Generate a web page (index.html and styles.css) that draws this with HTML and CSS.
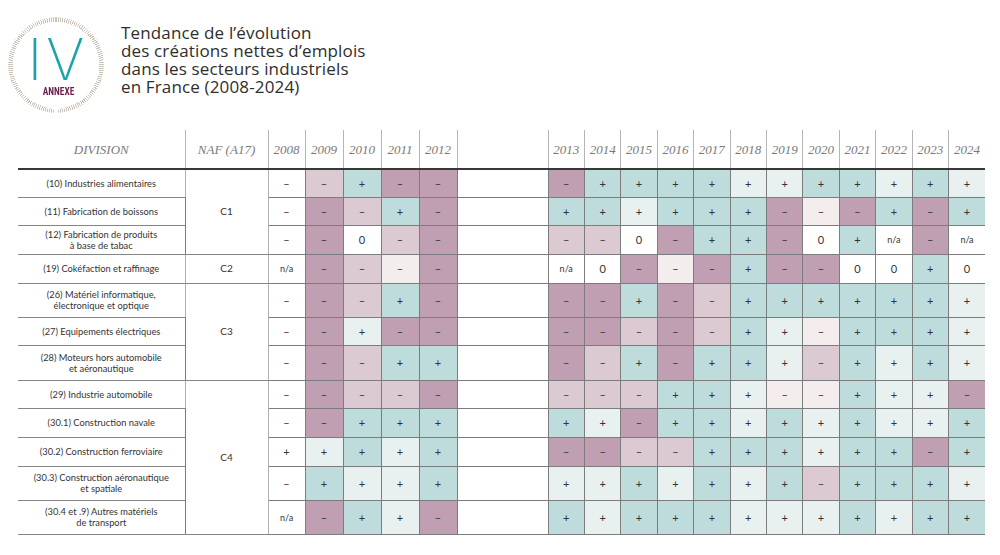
FILE: index.html
```html
<!DOCTYPE html>
<html lang="fr">
<head>
<meta charset="utf-8">
<title>Annexe IV</title>
<link rel="stylesheet" href="styles.css">
</head>
<body>
<header class="top">
  <div class="logo">
    <div class="logo-num">IV</div>
    <div class="logo-label">ANNEXE</div>
  </div>
  <h1 class="title">Tendance de l’évolution<br>des créations nettes d’emplois<br>dans les secteurs industriels<br>en France (2008-2024)</h1>
</header>
<table class="grid">
  <colgroup>
    <col class="c-div"><col class="c-naf"><col class="c-y8"><col class="c-yl"><col class="c-yl"><col class="c-yl"><col class="c-yl"><col class="c-gap">
    <col class="c-yr"><col class="c-yr"><col class="c-yr"><col class="c-yr"><col class="c-yr"><col class="c-yr"><col class="c-yr"><col class="c-yr"><col class="c-yr"><col class="c-yr"><col class="c-yr"><col class="c-yr">
  </colgroup>
  <thead>
    <tr>
      <th class="first">DIVISION</th><th>NAF (A17)</th><th>2008</th><th>2009</th><th>2010</th><th>2011</th><th>2012</th><th></th>
      <th>2013</th><th>2014</th><th>2015</th><th>2016</th><th>2017</th><th>2018</th><th>2019</th><th>2020</th><th>2021</th><th>2022</th><th>2023</th><th class="last">2024</th>
    </tr>
  </thead>
  <tbody>
    <tr class="h28">
      <td class="label">(10) Industries alimentaires</td><td class="naf" rowspan="3">C1</td>
      <td class="w">–</td><td class="l">–</td><td class="t">+</td><td class="d">–</td><td class="d">–</td><td class="gap"></td>
      <td class="d">–</td><td class="t">+</td><td class="t">+</td><td class="t">+</td><td class="t">+</td><td class="s">+</td><td class="s">+</td><td class="t">+</td><td class="t">+</td><td class="s">+</td><td class="t">+</td><td class="s last">+</td>
    </tr>
    <tr class="h28">
      <td class="label">(11) Fabrication de boissons</td>
      <td class="w">–</td><td class="d">–</td><td class="l">–</td><td class="t">+</td><td class="d">–</td><td class="gap"></td>
      <td class="t">+</td><td class="t">+</td><td class="s">+</td><td class="t">+</td><td class="t">+</td><td class="t">+</td><td class="d">–</td><td class="p">–</td><td class="d">–</td><td class="t">+</td><td class="d">–</td><td class="t last">+</td>
    </tr>
    <tr class="h29">
      <td class="label">(12) Fabrication de produits<br>à base de tabac</td>
      <td class="w">–</td><td class="d">–</td><td class="w">0</td><td class="l">–</td><td class="d">–</td><td class="gap"></td>
      <td class="l">–</td><td class="l">–</td><td class="w">0</td><td class="d">–</td><td class="t">+</td><td class="t">+</td><td class="d">–</td><td class="w">0</td><td class="t">+</td><td class="w na">n/a</td><td class="d">–</td><td class="w na last">n/a</td>
    </tr>
    <tr class="h29">
      <td class="label">(19) Cokéfaction et raffinage</td><td class="naf">C2</td>
      <td class="w na">n/a</td><td class="d">–</td><td class="l">–</td><td class="p">–</td><td class="d">–</td><td class="gap"></td>
      <td class="w na">n/a</td><td class="w">0</td><td class="d">–</td><td class="p">–</td><td class="d">–</td><td class="t">+</td><td class="d">–</td><td class="d">–</td><td class="w">0</td><td class="w">0</td><td class="t">+</td><td class="w last">0</td>
    </tr>
    <tr class="h35">
      <td class="label">(26) Matériel informatique,<br>électronique et optique</td><td class="naf" rowspan="3">C3</td>
      <td class="w">–</td><td class="d">–</td><td class="l">–</td><td class="t">+</td><td class="d">–</td><td class="gap"></td>
      <td class="d">–</td><td class="d">–</td><td class="t">+</td><td class="d">–</td><td class="l">–</td><td class="t">+</td><td class="t">+</td><td class="t">+</td><td class="t">+</td><td class="t">+</td><td class="t">+</td><td class="s last">+</td>
    </tr>
    <tr class="h28">
      <td class="label">(27) Equipements électriques</td>
      <td class="w">–</td><td class="d">–</td><td class="s">+</td><td class="d">–</td><td class="d">–</td><td class="gap"></td>
      <td class="d">–</td><td class="d">–</td><td class="l">–</td><td class="d">–</td><td class="l">–</td><td class="t">+</td><td class="s">+</td><td class="p">–</td><td class="t">+</td><td class="t">+</td><td class="t">+</td><td class="s last">+</td>
    </tr>
    <tr class="h35">
      <td class="label">(28) Moteurs hors automobile<br>et aéronautique</td>
      <td class="w">–</td><td class="d">–</td><td class="l">–</td><td class="t">+</td><td class="t">+</td><td class="gap"></td>
      <td class="d">–</td><td class="l">–</td><td class="t">+</td><td class="d">–</td><td class="t">+</td><td class="t">+</td><td class="s">+</td><td class="l">–</td><td class="t">+</td><td class="s">+</td><td class="t">+</td><td class="s last">+</td>
    </tr>
    <tr class="h28">
      <td class="label">(29) Industrie automobile</td><td class="naf" rowspan="5">C4</td>
      <td class="w">–</td><td class="d">–</td><td class="l">–</td><td class="l">–</td><td class="d">–</td><td class="gap"></td>
      <td class="l">–</td><td class="l">–</td><td class="l">–</td><td class="t">+</td><td class="t">+</td><td class="s">+</td><td class="p">–</td><td class="p">–</td><td class="t">+</td><td class="s">+</td><td class="s">+</td><td class="d last">–</td>
    </tr>
    <tr class="h29">
      <td class="label">(30.1) Construction navale</td>
      <td class="w">–</td><td class="d">–</td><td class="t">+</td><td class="t">+</td><td class="t">+</td><td class="gap"></td>
      <td class="t">+</td><td class="s">+</td><td class="d">–</td><td class="t">+</td><td class="t">+</td><td class="s">+</td><td class="t">+</td><td class="s">+</td><td class="t">+</td><td class="s">+</td><td class="s">+</td><td class="t last">+</td>
    </tr>
    <tr class="h29">
      <td class="label">(30.2) Construction ferroviaire</td>
      <td class="w">+</td><td class="s">+</td><td class="t">+</td><td class="s">+</td><td class="t">+</td><td class="gap"></td>
      <td class="d">–</td><td class="d">–</td><td class="l">–</td><td class="l">–</td><td class="t">+</td><td class="t">+</td><td class="t">+</td><td class="s">+</td><td class="t">+</td><td class="t">+</td><td class="d">–</td><td class="t last">+</td>
    </tr>
    <tr class="h34">
      <td class="label">(30.3) Construction aéronautique<br>et spatiale</td>
      <td class="w">–</td><td class="t">+</td><td class="s">+</td><td class="s">+</td><td class="t">+</td><td class="gap"></td>
      <td class="s">+</td><td class="s">+</td><td class="t">+</td><td class="s">+</td><td class="t">+</td><td class="s">+</td><td class="t">+</td><td class="l">–</td><td class="t">+</td><td class="t">+</td><td class="t">+</td><td class="s last">+</td>
    </tr>
    <tr class="h35">
      <td class="label">(30.4 et .9) Autres matériels<br>de transport</td>
      <td class="w na">n/a</td><td class="d">–</td><td class="t">+</td><td class="s">+</td><td class="d">–</td><td class="gap"></td>
      <td class="t">+</td><td class="s">+</td><td class="t">+</td><td class="t">+</td><td class="t">+</td><td class="s">+</td><td class="s">+</td><td class="s">+</td><td class="t">+</td><td class="s">+</td><td class="t">+</td><td class="t last">+</td>
    </tr>
  </tbody>
</table>
</body>
</html>
```
FILE: styles.css
```css
body {
  margin: 0;
  background: #ffffff;
  color: #333333;
  font-family: Lato, "Open Sans", sans-serif;
}

.top {
  display: flex;
  align-items: flex-start;
  gap: 17px;
  height: 130px;
  box-sizing: border-box;
  padding: 17px 0 0 8px;
}

.logo {
  position: relative;
  flex: none;
  width: 96px;
  height: 96px;
  display: flex;
  flex-direction: column;
  align-items: center;
  box-sizing: border-box;
  padding-top: 20px;
  padding-left: 4px;
}

.logo::before {
  content: "";
  position: absolute;
  inset: 0;
  border-radius: 50%;
  background: repeating-conic-gradient(#cbc2b8 0deg 1.2deg, transparent 1.2deg 2.6deg);
  -webkit-mask: radial-gradient(circle closest-side, transparent calc(100% - 5px), #000 calc(100% - 4.5px));
  mask: radial-gradient(circle closest-side, transparent calc(100% - 5px), #000 calc(100% - 4.5px));
}

.logo-num {
  font-family: Inter, "DejaVu Sans", sans-serif;
  font-weight: 200;
  font-size: 58px;
  line-height: 44px;
  height: 44px;
  color: #1ea4a8;
  letter-spacing: 4px;
}

.logo-label {
  font-family: "Roboto Condensed", Roboto, sans-serif;
  font-weight: 700;
  font-size: 11px;
  line-height: 11px;
  margin-top: 5px;
  color: #6b1f4d;
  transform: scaleX(0.85);
}

.title {
  margin: 0;
  padding-top: 7px;
  font-family: "Open Sans", Lato, sans-serif;
  font-weight: 400;
  font-size: 17px;
  line-height: 18px;
  letter-spacing: 0.15px;
  color: #2e2e2e;
}

.grid {
  border-collapse: collapse;
  table-layout: fixed;
  width: 967px;
  margin-left: 18px;
}

.c-div { width: 167px; }
.c-naf { width: 83px; }
.c-y8 { width: 37px; }
.c-yl { width: 38px; }
.c-gap { width: 91px; }
.c-yr { width: 36.42px; }

.grid th {
  height: 36px;
  padding: 2px 0 0;
  font-family: "Liberation Serif", "DejaVu Serif", serif;
  font-style: italic;
  font-weight: 400;
  font-size: 13px;
  color: #7a7a7a;
  border-left: 1px solid #b5b5b5;
  border-bottom: 2px solid #383838;
  vertical-align: middle;
  text-align: center;
}

.grid th.first { border-left: none; }

.grid td {
  padding: 0;
  text-align: center;
  vertical-align: middle;
  font-size: 11px;
  line-height: 11px;
  color: #333333;
  border: 1px solid #7c7c7c;
}

.grid td.label {
  font-size: 9.3px;
  line-height: 11px;
  border-left: none;
  border-right: 1px solid #b0b0b0;
  border-top: 1px solid #858585;
  border-bottom: 1px solid #858585;
}

.grid td.naf {
  font-size: 10px;
  border-right: 1px solid #b0b0b0;
  border-bottom: 1px solid #858585;
}

.grid td.last { border-right: none; }

.grid td.na { font-size: 9px; }

.h28 { height: 28px; }
.h29 { height: 29px; }
.h34 { height: 34px; }
.h35 { height: 34.5px; }

.w { background: #ffffff; }
.d { background: #c19fb2; }
.l { background: #dccad2; }
.p { background: #f3eded; }
.t { background: #bedcdc; }
.s { background: #e8f1f0; }
.gap { background: #ffffff; }
```
